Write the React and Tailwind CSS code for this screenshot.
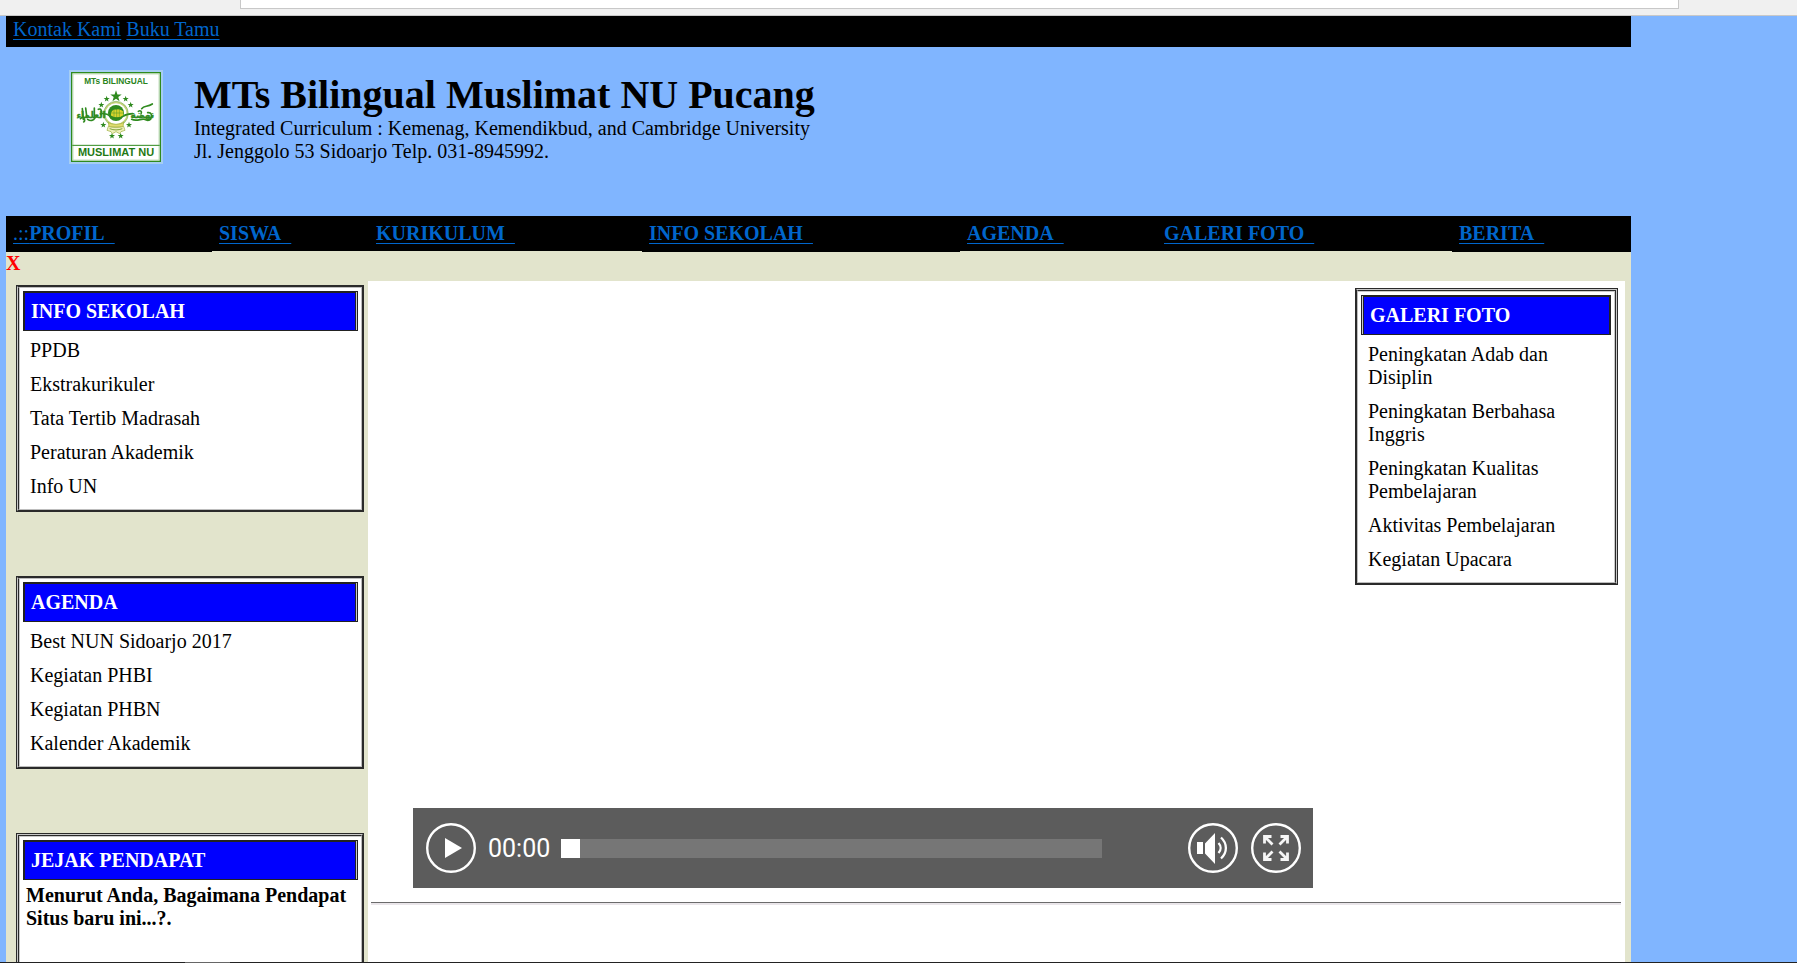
import React from "react";

const NAV = [
  { prefix: ".::", label: "PROFIL", tall: true },
  { label: "SISWA" },
  { label: "KURIKULUM" },
  { label: "INFO SEKOLAH", tall: true },
  { label: "AGENDA" },
  { label: "GALERI FOTO" },
  { label: "BERITA", tall: true },
];

const INFO = ["PPDB", "Ekstrakurikuler", "Tata Tertib Madrasah", "Peraturan Akademik", "Info UN"];
const AGENDA = ["Best NUN Sidoarjo 2017", "Kegiatan PHBI", "Kegiatan PHBN", "Kalender Akademik"];
const GALERI = [
  "Peningkatan Adab dan Disiplin",
  "Peningkatan Berbahasa Inggris",
  "Peningkatan Kualitas Pembelajaran",
  "Aktivitas Pembelajaran",
  "Kegiatan Upacara",
];

// Bevelled frames are stacked one-pixel rings; a side is either a solid edge or a split one.
const FRAMES = {
  left: [
    "border-[#2a2a2a] border-l-[#c9c9c9]",
    "border-[#bdbdbd] border-l-[#2a2a2a]",
    "border-l border-[#c9c9c9]",
  ],
  topLeft: [
    "border-[#2a2a2a] border-l-[#c9c9c9] border-t-[#c9c9c9]",
    "border-[#bdbdbd] border-l-[#2a2a2a] border-t-[#2a2a2a]",
    "border-l border-t border-[#c9c9c9]",
  ],
  topRight: [
    "border-[#2a2a2a] border-r-[#c9c9c9] border-t-[#c9c9c9]",
    "border-[#bdbdbd] border-r-[#2a2a2a] border-t-[#2a2a2a]",
    "border-r border-t border-[#c9c9c9]",
  ],
};

function Panel({ title, frame, split, children }) {
  const [outer, middle, inner] = FRAMES[frame];
  return (
    <section className="border border-[#2a2a2a] bg-white">
      <div className={"border " + outer}>
        <div className={"border " + middle}>
          <div className={"p-[3px] " + inner}>
            <div className={"border border-[#222] bg-[#c9c9c9] " + (split === "left" ? "pl-px" : "pr-px")}>
              <h2 className="border-x border-t border-[#222] bg-[#0000ff] px-1.5 py-[7px] font-bold text-white">
                {title}
              </h2>
            </div>
            {children}
          </div>
        </div>
      </div>
    </section>
  );
}

function LinkList({ items }) {
  return (
    <ul className="flex flex-col gap-[11px] px-[7px] py-2">
      {items.map((t) => (
        <li key={t}>
          <a href="#">{t}</a>
        </li>
      ))}
    </ul>
  );
}

const STAR = "M0-10 2.4-3.1 9.5-3.1 3.8 1.2 5.9 8.1 0 4-5.9 8.1-3.8 1.2-9.5-3.1-2.4-3.1Z";
const STARS = [
  [141, 79, 1.8],
  [113, 87, 0.95],
  [170, 87, 0.95],
  [97, 105, 0.95],
  [185, 105, 0.95],
  [103, 165, 0.95],
  [180, 165, 0.95],
  [129, 198, 0.95],
  [155, 198, 0.95],
];

function Logo() {
  return (
    <svg viewBox="0 0 282 282" className="size-[94px] shrink-0" role="img" aria-label="MTs Bilingual Muslimat NU">
      <rect width="282" height="282" fill="#a5cdf3" />
      <rect x="8" y="8" width="266" height="266" fill="#fff" stroke="#2f8a1f" strokeWidth="4" />
      <rect x="12" y="12" width="258" height="258" fill="none" stroke="#a9d09f" strokeWidth="2" />
      <path d="M10 226H272" stroke="#2f8a1f" strokeWidth="3" />
      <text x="141" y="41" textAnchor="middle" fontSize="25" fontWeight="700" fill="#2a841c" fontFamily="Liberation Sans, sans-serif">
        MTs BILINGUAL
      </text>
      <text x="141" y="259" textAnchor="middle" fontSize="33" fontWeight="700" fill="#1f7a14" fontFamily="Liberation Sans, sans-serif">
        MUSLIMAT NU
      </text>
      {STARS.map(([x, y, s]) => (
        <path key={x + "-" + y} d={STAR} fill="#2f8a1f" transform={`translate(${x} ${y}) scale(${s})`} />
      ))}
      <circle cx="141" cy="131" r="34" fill="#fff" stroke="#c3d27a" strokeWidth="5" />
      <circle cx="141" cy="131" r="37" fill="none" stroke="#5d9f35" strokeWidth="1.5" />
      <circle cx="141" cy="129" r="24" fill="#2f8a1f" />
      <path d="M126 130c2-8 8-12 15-11 6-4 17 0 22 6l-1 12c-8 7-26 8-36 3Z" fill="#d8d52c" />
      <path d="M135 118v24M143 116v28M151 116v26M124 129h40" stroke="#4b972a" strokeWidth="1.5" />
      <path d="M92 132c14-4 24 0 34 7s26 7 36 0 18-8 30-8" fill="none" stroke="#2f8a1f" strokeWidth="5" />
      <path d="M118 156c6 9 40 9 46 0l-2 15h-42Z" fill="#e0dc70" stroke="#9cad3c" strokeWidth="2" />
      <path d="M118 169c14 5 32 5 46 0l4 12-12 4-4 6-11-6-11 6-4-6-12-4Z" fill="#eef0bd" stroke="#9cad3c" strokeWidth="2" />
      <path d="M122 176c13 5 25 5 38 0" fill="none" stroke="#7fa336" strokeWidth="3" />
      <g fill="#2f8a1f" stroke="#2f8a1f" strokeWidth="1.2" fontSize="27" fontWeight="700" fontFamily="DejaVu Sans, sans-serif" textAnchor="middle">
        <text x="66" y="144">العلماء</text>
        <text x="220" y="144">نهضة</text>
      </g>
      <g fill="none" stroke="#2f8a1f" strokeWidth="5" strokeLinecap="round">
        <path d="M218 116c8-10 16-4 32-14M188 148c16 8 30-4 38 0s14 6 20-2M236 128c10-2 16 8 8 18M208 124c6-4 12 0 8 8" />
        <path d="M40 116l3 32M50 114l3 24M76 114v30M34 146c8-10 18 6 10 10M56 148c8 6 18 4 22-4M88 118c8-4 12 6 8 16" />
      </g>
    </svg>
  );
}

function RoundButton({ label, children }) {
  return (
    <button type="button" aria-label={label} className="size-[50px] shrink-0">
      <svg viewBox="0 0 50 50" className="size-full" fill="none">
        <circle cx="25" cy="25" r="23.8" stroke="#fff" strokeWidth="2.4" />
        {children}
      </svg>
    </button>
  );
}

function Player() {
  return (
    <div className="flex h-20 items-center bg-[#5c5c5c] pr-3 pl-[13px]">
      <RoundButton label="Play">
        <path d="M19 15v20l17-10Z" fill="#fff" />
      </RoundButton>
      <span className="ml-3 pt-0.5 font-['Roboto','Liberation_Sans',sans-serif] text-[25px] leading-[30px] text-white">
        00:00
      </span>
      <input
        type="range"
        aria-label="Posisi"
        min="0"
        max="100"
        defaultValue="0"
        className="mr-[86px] ml-[11px] h-[19px] min-w-0 flex-1 appearance-none bg-[#767676] [&::-webkit-slider-thumb]:size-[19px] [&::-webkit-slider-thumb]:appearance-none [&::-webkit-slider-thumb]:bg-white"
      />
      <div className="flex gap-[13px]">
        <RoundButton label="Volume">
          <path d="M9 19h6v12H9ZM17 20.500l10-10.500v31L17 30.500Z" fill="#fff" />
          <path d="M30.500 20c2.800 3 2.800 7 0 10M33 14.500c6.500 6 6.500 15 0 21" stroke="#fff" strokeWidth="2.300" />
        </RoundButton>
        <RoundButton label="Layar penuh">
          <g stroke="#f6f6f6" strokeWidth="2.800">
            <path d="M13.500 20.500v-7h7M13.500 13.500l8 8" />
            <path d="M36.500 20.500v-7h-7M36.500 13.500l-8 8" />
            <path d="M13.500 29.500v7h7M13.500 36.500l8-8" />
            <path d="M36.500 29.500v7h-7M36.500 36.500l-8-8" />
          </g>
        </RoundButton>
      </div>
    </div>
  );
}

const LINK = "text-[#0066cc] underline decoration-1 underline-offset-[3px]";

export default function App() {
  return (
    <div className="flex h-screen flex-col overflow-hidden bg-[#80b5ff] font-['Liberation_Serif',serif] text-[20px] leading-[23px] text-black">
      <div className="h-4 shrink-0 border-b border-[#c8c8c8] bg-[#f0f0f0] pr-[118px] pl-60">
        <div className="h-[9px] border-x border-b border-[#c8c8c8] bg-white" />
      </div>

      <div className="mr-[166px] ml-1.5 flex min-h-0 flex-1 flex-col overflow-hidden">
        <div className="flex h-[31px] shrink-0 gap-[5px] bg-black px-[7px] pt-0.5">
          <a href="#" className={LINK}>Kontak Kami</a>
          <a href="#" className={LINK}>Buku Tamu</a>
        </div>

        <header className="flex h-[169px] shrink-0 gap-[31px] pt-[23px] pl-[63px]">
          <Logo />
          <div className="pt-0.5">
            <h1 className="text-[40px] leading-[45px] font-bold">MTs Bilingual Muslimat NU Pucang</h1>
            <p>Integrated Curriculum : Kemenag, Kemendikbud, and Cambridge University</p>
            <p>Jl. Jenggolo 53 Sidoarjo Telp. 031-8945992.</p>
          </div>
        </header>

        <nav className="grid h-9 shrink-0 grid-cols-[206fr_157fr_273fr_318fr_197fr_295fr_179fr] bg-black">
          {NAV.map((n) => (
            <div key={n.label} className={"pt-1.5 pl-[7px] " + (n.tall ? "" : "border-b border-[#e2e4cc]")}>
              <a href="#" className={"whitespace-nowrap " + LINK}>
                {n.prefix}
                <b>{n.label + "\u00a0\u00a0"}</b>
              </a>
            </div>
          ))}
        </nav>

        <main className="flex min-h-0 flex-1 flex-col overflow-hidden bg-[#e2e4cc]">
          <p className="h-[29px] shrink-0 font-bold text-[#ff0000]">X</p>
          <div className="flex min-h-0 flex-1 pr-1.5">
            <aside className="flex w-[362px] shrink-0 flex-col gap-16 pt-1 pr-1 pl-2.5">
              <Panel title="INFO SEKOLAH" frame="left">
                <LinkList items={INFO} />
              </Panel>
              <Panel title="AGENDA" frame="left">
                <LinkList items={AGENDA} />
              </Panel>
              <Panel title="JEJAK PENDAPAT" frame="topLeft">
                <p className="min-h-32 px-[3px] pt-1 font-bold">Menurut Anda, Bagaimana Pendapat Situs baru ini...?.</p>
              </Panel>
            </aside>

            <div className="min-w-0 flex-1 bg-white">
              <div className="flex">
                <div className="flex min-h-[621px] flex-1 flex-col justify-end pr-[42px] pb-3.5 pl-[45px]">
                  <Player />
                </div>
                <aside className="w-[270px] shrink-0 pt-[7px] pr-[7px]">
                  <Panel title="GALERI FOTO" frame="topRight" split="left">
                    <LinkList items={GALERI} />
                  </Panel>
                </aside>
              </div>
              <hr className="mr-1 ml-[3px] h-[3px] border-t border-[#6b6b6b] bg-[#eae6ea]" />
            </div>
          </div>
        </main>
      </div>

      <div className="flex h-px shrink-0 bg-[#222] pl-[185px]">
        <div className="w-[45px] bg-[#666]" />
      </div>
    </div>
  );
}
